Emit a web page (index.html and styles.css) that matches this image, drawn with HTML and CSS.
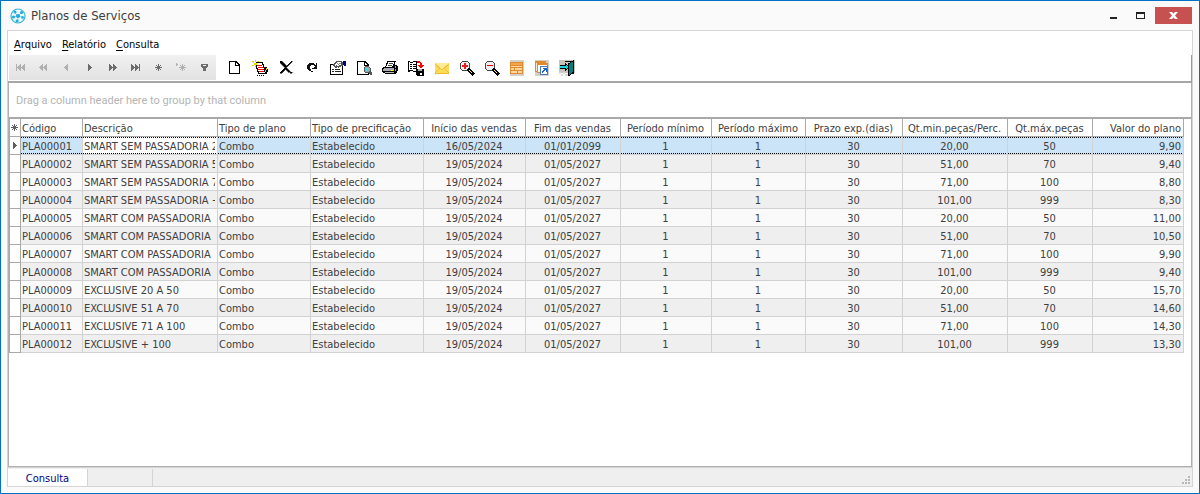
FILE: index.html
```html
<!DOCTYPE html>
<html lang="pt-BR">
<head>
<meta charset="utf-8">
<title>Planos de Serviços</title>
<link rel="stylesheet" href="styles.css">
</head>
<body>
<div class="window">
  <header class="titlebar">
    <svg class="app-icon" viewBox="0 0 16 16"><circle cx="8" cy="8" r="7" fill="#eafaff" stroke="#35b5dc" stroke-width="1.2"/><path d="M8 8 4 4M8 8l4-4M8 8v6M8 8 2 9M8 8l6 1" stroke="#7fd3ea"/><g fill="#27aad8"><circle cx="8" cy="8" r="2.1"/><circle cx="5" cy="4" r="1.5"/><circle cx="11.500" cy="4.500" r="1.600"/><circle cx="3.500" cy="9" r="1.500"/><circle cx="12.500" cy="9.500" r="1.300"/><circle cx="7" cy="13" r="1.400"/></g></svg>
    <h1 class="title">Planos de Serviços</h1>
    <button class="win-btn" aria-label="Minimizar"><svg viewBox="0 0 9 9"><path d="M1 6h7v2H1z" fill="#222"/></svg></button>
    <button class="win-btn" aria-label="Maximizar"><svg viewBox="0 0 9 9"><path d="M0 1h9v7H0zM1 3v4h7V3z" fill="#222" fill-rule="evenodd"/></svg></button>
    <button class="win-btn close" aria-label="Fechar"><svg viewBox="0 0 9 9"><path d="M0 1h3l1.500 1.500L6 1h3L6 4.500 9 8H6L4.500 6.500 3 8H0l3-3.500z" fill="#fff"/></svg></button>
  </header>

  <main class="client">
    <nav class="menu">
      <button><u>A</u>rquivo</button><button><u>R</u>elatório</button><button><u>C</u>onsulta</button>
    </nav>
    <div class="toolbar">
      <div class="navigator">
        <button disabled aria-label="Primeiro"><svg viewBox="0 0 11 9"><path d="M1 1h1v7H1zM5 1h1v7H5V7H4V6H3V5H2V4h1V3h1V2h1zM9 1h1v7H9V7H8V6H7V5H6V4h1V3h1V2h1z"/></svg></button>
        <button disabled aria-label="Página anterior"><svg viewBox="0 0 11 9"><path d="M4 1h1v7H4V7H3V6H2V5H1V4h1V3h1V2h1zM8 1h1v7H8V7H7V6H6V5H5V4h1V3h1V2h1z"/></svg></button>
        <button disabled aria-label="Anterior"><svg viewBox="0 0 11 9"><path d="M6 1h1v7H6V7H5V6H4V5H3V4h1V3h1V2h1z"/></svg></button>
        <button aria-label="Próximo"><svg viewBox="0 0 11 9"><path d="M4 1h1v1h1v1h1v1h1v1H7v1H6v1H5v1H4z"/></svg></button>
        <button aria-label="Próxima página"><svg viewBox="0 0 11 9"><path d="M2 1h1v1h1v1h1v1h1v1H5v1H4v1H3v1H2zM6 1h1v1h1v1h1v1h1v1H9v1H8v1H7v1H6z"/></svg></button>
        <button aria-label="Último"><svg viewBox="0 0 11 9"><path d="M1 1h1v1h1v1h1v1h1v1H4v1H3v1H2v1H1zM5 1h1v1h1v1h1v1h1v1H8v1H7v1H6v1H5zM9 1h1v7H9z"/></svg></button>
        <button aria-label="Marcar"><svg viewBox="0 0 11 9"><path d="M5 1h1v7H5zM2 4h7v1H2zM3 2h1v1H3zM4 3h3v3H4zM7 2h1v1H7zM3 6h1v1H3zM7 6h1v1H7z"/></svg></button>
        <button disabled aria-label="Ir para marca"><svg viewBox="0 0 11 9"><path d="M6 1h1v7H6zM3 4h7v1H3zM4 2h1v1H4zM5 3h3v3H5zM8 2h1v1H8zM4 6h1v1H4zM8 6h1v1H8zM0 0h1v1h1v1H1v1H0z"/></svg></button>
        <button aria-label="Filtrar"><svg viewBox="0 0 11 9"><path d="M2 1h7v3H8v1H7v3H4V5H3V4H2zM4 2v1h3V2z" fill-rule="evenodd"/></svg></button>
      </div>
      <div class="tools">
        <button aria-label="Novo"><svg viewBox="0 0 16 16"><path d="M3 1h7l4 4v9H3zM4 2v11h9V6H9V2zM10 3v2h2z" fill="#000" fill-rule="evenodd"/></svg></button>
        <button aria-label="Alterar"><svg viewBox="0 0 16 16"><path d="M4 2h7v2h1v3h1v3h1v4H6v-2H5V9H4z" fill="#000"/><path d="M5 3h5v2h1v3h1v3h1v2H7v-2H6V8H5z" fill="#fff"/><path d="M5 5h5v1H5zM6 7h5v1H6zM6 9h6v1H6zM7 11h5v1H7z" fill="#f00"/><path d="M0 1h2v1H0zM3 0h1v2H3zM5 1h2v1H5zM0 5h2v1H0zM2 3h3v2H2zM1 2h1v1H1zM3 5h1v2H3z" fill="#e8d800"/><path d="M13 7h2v2h1v3h-1v2h-2v-2h-1V9h1z" fill="#000"/><path d="M14 8h1v2h-1v2h-1v-2h1z" fill="#ffc000"/><path d="M5 15h1v1H5zM7 15h1v1H7zM9 15h1v1H9zM11 15h1v1h-1z" fill="#000"/></svg></button>
        <button aria-label="Excluir"><svg viewBox="0 0 16 16"><path d="M2 1h2v1h1v1h1v1h1v1h1v1h1V5h1V4h1V3h1V2h1V1h1v1h-1v1h-1v1h-1v1h-1v1H9v1H8v1h1v1h1v1h1v1h1v1h2v1h-2v-1h-2v-1H9v-1H8V9H7v1H6v1H5v1H4v1H2v-1h1v-1h1v-1h1V9h1V8h1V7H6V6H5V5H4V4H3V3H2z" fill="#000" stroke="#000" stroke-width=".5"/></svg></button>
        <button aria-label="Atualizar"><svg viewBox="0 0 16 16"><path d="M5 3h5v1h1v1h1V3h1v6H8V8h2V7h1V6h-1V5H7v1H6v3h1v2h2v1H7v-1H5v-1H4V9H3V5h1V4h1z" fill="#111"/></svg></button>
        <button aria-label="Propriedades"><svg viewBox="0 0 16 16"><path d="M0 4h13v11H0z" fill="#000"/><path d="M1 5h11v9H1z" fill="#fff"/><path d="M2 9h2v1H2zM5 9h5v1H5zM2 11h2v1H2zM5 11h6v1H5z" fill="#222"/><path d="M3 4h1V3h1V2h1V1h6v1h1v4h-2v1H9v1H8V7H7v1H5V7H4V6H3z" fill="#555"/><path d="M5 4h1V3h1V2h4v3H9v1H7V5H6v1H5z" fill="#fff"/><path d="M7 3h1v1h1v1H8V4H7zM9 3h2v1H9z" fill="#888"/><path d="M13 1h3v5h-2V5h-1z" fill="#000084"/></svg></button>
        <button aria-label="Visualizar"><svg viewBox="0 0 16 16"><path d="M1 1h8l4 4v10H1zM2 2v12h10V6H8V2zM9 3v2h2z" fill="#000" fill-rule="evenodd"/><path d="M9 6h4v1h1v1h1v4h1v3h-2v-1h-1v-1H9v-1H8V7h1z" fill="#555"/><path d="M9 7h4v1h1v3h-1v1H9z" fill="#9aabb0"/><path d="M10 8h2v3h-2z" fill="#35d8e5"/></svg></button>
        <button aria-label="Imprimir"><svg viewBox="0 0 16 16"><path d="M5 1h9v1h-1v3h2v1h1v5h-1v2h-1v1H3v-1H1v-1H0V8h1V7h2V6h1V3h1z" fill="#000"/><path d="M6 2h6v2h-1v2h-1v1H4V6h1V4h1z" fill="#fff"/><path d="M7 3h4v1H7zM6 5h4v1H6z" fill="#444"/><path d="M2 8h10v1H2zM1 9h11v2H1zM13 6h1v2h-1zM13 9h1v2h-1z" fill="#aaa"/><path d="M3 12h9v1H3z" fill="#bbb"/><path d="M9 10h2v1H9z" fill="#ff0"/></svg></button>
        <button aria-label="Salvar como"><svg viewBox="0 0 16 16"><path d="M0 1h2v1h3V1h4v11H5v-1H2v1H0z" fill="#000"/><path d="M1 2h1v1h3V2h3v9H5v-1H1z" fill="#fff"/><path d="M2 4h2v1H2zM5 4h3v1H5zM2 6h2v1H2zM5 6h3v1H5zM2 8h2v1H2zM5 8h3v1H5z" fill="#000"/><path d="M9 1h3v1h1v1h1v2h2v1h-1v1h-1v1h-2V7h-1V6h-1V5h2V3H9z" fill="#f00"/><path d="M8 9h8v7H9v-1H8z" fill="#000"/><path d="M10 9h4v2h-4z" fill="#aaa"/><path d="M12 13h2v2h-2z" fill="#fff"/></svg></button>
        <button aria-label="E-mail"><svg viewBox="0 0 16 16"><path d="M1 3h14v11H1z" fill="#ffdc55"/><path d="M1 3h14L8 9z" fill="#ffeb96"/><path d="m1 4 7 6 7-6M1 13l5-5M15 13l-5-5" fill="none" stroke="#f0c040"/><path d="M1 13h14v1H1z" fill="#edbb28"/></svg></button>
      </div>
      <div class="tools tight">
        <button aria-label="Aumentar zoom"><svg viewBox="0 0 16 16"><circle cx="6" cy="6" r="5" fill="#eee" stroke="#444"/><path d="M5 3h2v2h2v2H7v2H5V7H3V5h2z" fill="#e02020"/><path d="m9 9 6 6" stroke="#000" stroke-width="3"/><path d="m10 10 3 3" stroke="#ffe84a"/></svg></button>
        <button aria-label="Reduzir zoom"><svg viewBox="0 0 16 16"><circle cx="6" cy="6" r="5" fill="#eee" stroke="#444"/><path d="M3 5h6v1H3z" fill="#e00000"/><path d="m9 9 6 6" stroke="#000" stroke-width="3"/><path d="m10 10 3 3" stroke="#ffe84a"/></svg></button>
        <button aria-label="Grade"><svg viewBox="0 0 16 16"><path d="M1 0h14v16H1z" fill="#d4d0c8"/><path d="M1 2h13v12H1z" fill="#e08a30"/><path d="M2 3h11v2H2z" fill="#f2a64c"/><path d="M2 6h11v1H2zM2 8h3v2H2zM6 8h7v2H6zM2 11h6v2H2zM9 11h4v2H9z" fill="#ffd9a0"/></svg></button>
        <button aria-label="Exportar grade"><svg viewBox="0 0 16 16"><path d="M1 0h14v16H1z" fill="#d4d0c8"/><path d="M1 1h11v11H1z" fill="#e08a30"/><path d="M2 3h1v8H2zM4 3h7v8H4z" fill="#ffe9cc"/><path d="M3 3h11v10H3z" fill="#e08a30"/><path d="M4 5h9v7H4z" fill="#fff"/><path d="M6 6h8v9H6z" fill="#4779b5"/><path d="M7 7h6v7H7z" fill="#fff"/><path d="M9 8h4v4h-1v-2h-1v1h-1v1H9v1H8v-2h1v-1h1V9H9z" fill="#1763bd"/></svg></button>
        <button aria-label="Sair"><svg viewBox="0 0 16 16"><path d="M0 0h16v13H0z" fill="#c8c4bc"/><path d="M0 12h2v2H0zM4 12h2v2H4zM8 14h2v2H8zM12 12h2v2h-2zM2 14h2v2H2zM6 14h2v2H6z" fill="#ddd"/><path d="M6 1h9v13h-2V2H6z" fill="#000"/><path d="M9 4l5-3v11l-3 3H9z" fill="#008080" stroke="#000"/><path d="M1 5h5V3h1v1h1v1h1v1h1v2H9v1H8v1H7v1H6V9H1z" fill="#000"/><path d="M1 6h6V5h1v1h1v2H8v1H7V8H1z" fill="#16d4dc"/></svg></button>
      </div>
    </div>

    <section class="grid">
      <p class="group-panel">Drag a column header here to group by that column</p>
      <table>
        <colgroup><col class="w-mark"><col class="w-code"><col class="w-desc"><col class="w-plan"><col class="w-price"><col class="w-start"><col class="w-end"><col class="w-min"><col class="w-max"><col class="w-term"><col class="w-qmin"><col class="w-qmax"><col class="w-value"></colgroup>
        <thead>
          <tr><th class="mark"><svg viewBox="0 0 9 9"><path d="M4 1h1v7H4zM1 4h7v1H1zM2 2h1v1H2zM3 3h3v3H3zM6 2h1v1H6zM2 6h1v1H2zM6 6h1v1H6z"/></svg></th><th>Código</th><th>Descrição</th><th>Tipo de plano</th><th>Tipo de precificação</th><th>Início das vendas</th><th>Fim das vendas</th><th>Período mínimo</th><th>Período máximo</th><th>Prazo exp.(dias)</th><th>Qt.min.peças/Perc.</th><th>Qt.máx.peças</th><th>Valor do plano</th></tr>
        </thead>
        <tbody>
          <tr class="selected"><td class="mark"><svg viewBox="0 0 9 9"><path d="M3 1h1v1h1v1h1v1h1v1H6v1H5v1H4v1H3z"/></svg></td><td>PLA00001</td><td class="focused"><span class="clip">SMART SEM PASSADORIA 2</span></td><td>Combo</td><td>Estabelecido</td><td>16/05/2024</td><td>01/01/2099</td><td>1</td><td>1</td><td>30</td><td>20,00</td><td>50</td><td>9,90</td></tr>
          <tr><td class="mark"></td><td>PLA00002</td><td><span class="clip">SMART SEM PASSADORIA 5</span></td><td>Combo</td><td>Estabelecido</td><td>19/05/2024</td><td>01/05/2027</td><td>1</td><td>1</td><td>30</td><td>51,00</td><td>70</td><td>9,40</td></tr>
          <tr><td class="mark"></td><td>PLA00003</td><td><span class="clip">SMART SEM PASSADORIA 7</span></td><td>Combo</td><td>Estabelecido</td><td>19/05/2024</td><td>01/05/2027</td><td>1</td><td>1</td><td>30</td><td>71,00</td><td>100</td><td>8,80</td></tr>
          <tr><td class="mark"></td><td>PLA00004</td><td><span class="clip">SMART SEM PASSADORIA +</span></td><td>Combo</td><td>Estabelecido</td><td>19/05/2024</td><td>01/05/2027</td><td>1</td><td>1</td><td>30</td><td>101,00</td><td>999</td><td>8,30</td></tr>
          <tr><td class="mark"></td><td>PLA00005</td><td>SMART COM PASSADORIA</td><td>Combo</td><td>Estabelecido</td><td>19/05/2024</td><td>01/05/2027</td><td>1</td><td>1</td><td>30</td><td>20,00</td><td>50</td><td>11,00</td></tr>
          <tr><td class="mark"></td><td>PLA00006</td><td>SMART COM PASSADORIA</td><td>Combo</td><td>Estabelecido</td><td>19/05/2024</td><td>01/05/2027</td><td>1</td><td>1</td><td>30</td><td>51,00</td><td>70</td><td>10,50</td></tr>
          <tr><td class="mark"></td><td>PLA00007</td><td>SMART COM PASSADORIA</td><td>Combo</td><td>Estabelecido</td><td>19/05/2024</td><td>01/05/2027</td><td>1</td><td>1</td><td>30</td><td>71,00</td><td>100</td><td>9,90</td></tr>
          <tr><td class="mark"></td><td>PLA00008</td><td>SMART COM PASSADORIA</td><td>Combo</td><td>Estabelecido</td><td>19/05/2024</td><td>01/05/2027</td><td>1</td><td>1</td><td>30</td><td>101,00</td><td>999</td><td>9,40</td></tr>
          <tr><td class="mark"></td><td>PLA00009</td><td>EXCLUSIVE 20 A 50</td><td>Combo</td><td>Estabelecido</td><td>19/05/2024</td><td>01/05/2027</td><td>1</td><td>1</td><td>30</td><td>20,00</td><td>50</td><td>15,70</td></tr>
          <tr><td class="mark"></td><td>PLA00010</td><td>EXCLUSIVE 51 A 70</td><td>Combo</td><td>Estabelecido</td><td>19/05/2024</td><td>01/05/2027</td><td>1</td><td>1</td><td>30</td><td>51,00</td><td>70</td><td>14,60</td></tr>
          <tr><td class="mark"></td><td>PLA00011</td><td>EXCLUSIVE 71 A 100</td><td>Combo</td><td>Estabelecido</td><td>19/05/2024</td><td>01/05/2027</td><td>1</td><td>1</td><td>30</td><td>71,00</td><td>100</td><td>14,30</td></tr>
          <tr><td class="mark"></td><td>PLA00012</td><td>EXCLUSIVE + 100</td><td>Combo</td><td>Estabelecido</td><td>19/05/2024</td><td>01/05/2027</td><td>1</td><td>1</td><td>30</td><td>101,00</td><td>999</td><td>13,30</td></tr>
        </tbody>
      </table>
    </section>

    <footer class="statusbar">
      <span class="status-mode">Consulta</span><span class="status-cell"></span>
      <svg class="grip" viewBox="0 0 8 8"><path d="M6 0h2v2H6zM3 3h2v2H3zM6 3h2v2H6zM0 6h2v2H0zM3 6h2v2H3zM6 6h2v2H6z" fill="#b8b8b8"/></svg>
    </footer>
  </main>
</div>
</body>
</html>
```
FILE: styles.css
```css
* { box-sizing: border-box; }

body {
  margin: 0;
  font-family: "DejaVu Sans Condensed", "Noto Sans", sans-serif;
  font-size: 11px;
  color: #404040;
}

button {
  display: flex;
  align-items: center;
  justify-content: center;
  padding: 0;
  border: 0;
  background: none;
  font: inherit;
  color: inherit;
}

svg { display: block; shape-rendering: crispEdges; }

.window {
  display: flex;
  flex-direction: column;
  min-height: 100vh;
  padding: 0 6px;
  border: 1px solid #0072c6;
  background: #fafafa;
}

.titlebar {
  display: flex;
  align-items: center;
  height: 29px;
}

.app-icon {
  width: 16px;
  height: 16px;
  margin: 0 5px 0 3px;
  shape-rendering: auto;
}

.title {
  flex: 1;
  margin: 0;
  font-size: 13px;
  font-weight: 400;
}

.win-btn { width: 27px; height: 17px; }
.win-btn svg { width: 9px; height: 9px; }
.win-btn.close { width: 37px; margin: 0 1px 0 1px; background: #c75050; }
.win-btn.close svg { shape-rendering: auto; }

.client {
  flex: 1;
  display: flex;
  flex-direction: column;
  margin-bottom: 6px;
  border: 1px solid #d4d4d4;
  background: #fff;
}

.menu {
  display: flex;
  gap: 10px;
  padding: 5px 6px 2px;
  color: #000;
}

.menu button { height: 17px; display: block; }
.menu u { text-underline-offset: 2px; }

.toolbar {
  display: flex;
  height: 28px;
  padding: 0 0 1px 1px;
  border-bottom: 2px solid #a6a6a6;
  border-right: 1px solid #999;
}

.navigator {
  display: flex;
  background: linear-gradient(#f1f1f1, #e2e2e2);
}

.navigator button { width: 23px; color: #6c6c6c; }
.navigator button:disabled { color: #b0b0b0; }
.navigator svg { width: 11px; height: 9px; fill: currentColor; }

.tools { display: flex; padding-left: 5px; }
.tools button { width: 26px; padding-top: 1px; }
.tools svg { width: 16px; height: 16px; overflow: visible; }
.tools.tight { padding: 0; }
.tools.tight button { width: 25px; padding-right: 1px; }

.grid {
  flex: 1;
  border: 1px solid #b0b0b0;
  border-top: 0;
}

.group-panel {
  margin: 0;
  padding: 2px 7px 0;
  font-family: Roboto, sans-serif;
  line-height: 32px;
  color: #b4b4b4;
  border-bottom: 2px solid #a9a9a9;
}

table {
  table-layout: fixed;
  width: 1175px;
  border-collapse: separate;
  border-spacing: 0;
}

.w-mark { width: 12px; }
.w-code { width: 62px; }
.w-desc { width: 135px; }
.w-plan { width: 93px; }
.w-price { width: 113px; }
.w-start { width: 102px; }
.w-end { width: 95px; }
.w-min { width: 91px; }
.w-max { width: 94px; }
.w-term { width: 97px; }
.w-qmin { width: 105px; }
.w-qmax { width: 85px; }
.w-value { width: 91px; }

th, td {
  height: 18px;
  padding: 2px 2px 0 1px;
  overflow: hidden;
  white-space: nowrap;
  line-height: 15px;
  font-weight: 400;
  text-align: center;
  border: solid #d2d2d2;
  border-width: 0 1px 1px 0;
}

th { border-color: #a9a9a9; background: #fff; }
td { background: #fafafa; }
tr:nth-child(even) td { background: #efefef; }

th:nth-child(-n+5), td:nth-child(-n+5) { text-align: left; }
th:last-child, td:last-child { text-align: right; }

.clip { display: block; overflow: hidden; }

tr .mark, tr:nth-child(even) .mark {
  padding: 0;
  background: #fff;
  border-color: #a9a9a9;
  border-left-width: 1px;
}

.mark svg { width: 9px; height: 9px; fill: #606060; }

.selected td:not(.mark) {
  background:
    repeating-linear-gradient(90deg, #000 0 1px, transparent 1px 2px) 0 0 / 100% 1px no-repeat,
    repeating-linear-gradient(90deg, #000 0 1px, transparent 1px 2px) 0 100% / 100% 1px no-repeat,
    #cce4f7;
  background-origin: padding-box;
}

.selected td.focused:not(.mark) { background-color: #fff; }

.statusbar {
  display: flex;
  align-items: stretch;
  height: 19px;
  border-top: 1px solid #d4d4d4;
  background: #efefef;
}

.status-mode {
  width: 80px;
  margin-top: 1px;
  padding-top: 3px;
  border-right: 1px solid #d4d4d4;
  background: #fff;
  color: #000080;
  text-align: center;
  line-height: 14px;
}

.status-cell { width: 65px; margin-top: 1px; border-right: 1px solid #d4d4d4; }

.grip { width: 8px; height: 8px; margin: auto 2px 2px auto; }
```
